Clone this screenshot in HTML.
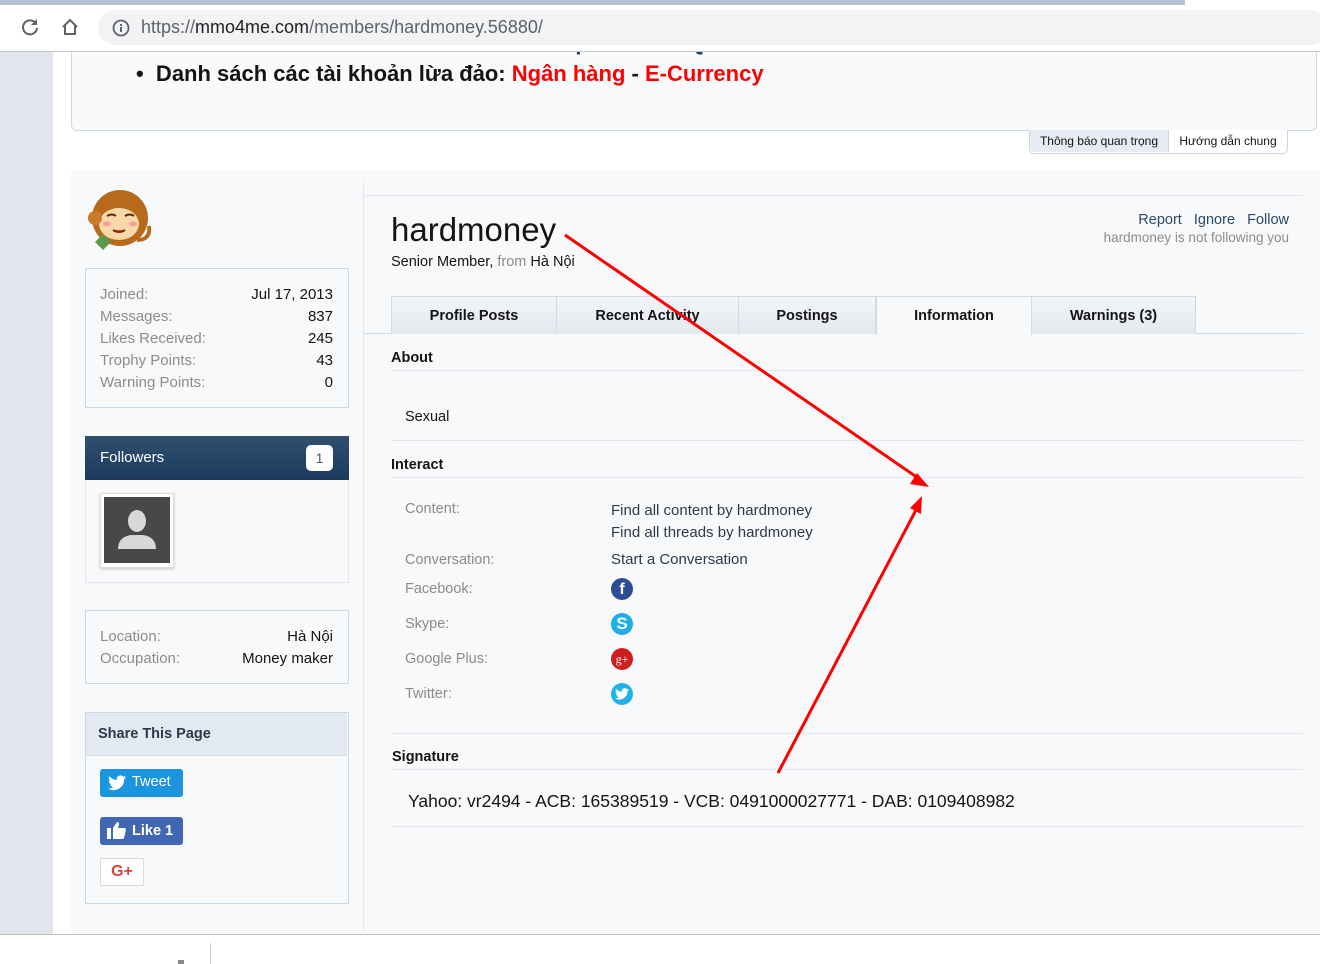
<!DOCTYPE html>
<html><head><meta charset="utf-8">
<style>
*{margin:0;padding:0;box-sizing:border-box}
body{width:1320px;height:964px;overflow:hidden;position:relative;background:#fff;font-family:"Liberation Sans",Arial,sans-serif;font-size:15px;color:#141414}
.a{position:absolute;white-space:nowrap}
.lab{color:#8c8c8c}
.r{text-align:right}
.tab{position:absolute;top:296px;height:38px;background:linear-gradient(#f3f5f8,#e3e9f0);border:1px solid #cfdbe7;border-bottom:none;font-weight:bold;font-size:14.5px;text-align:center;line-height:38px}
.hl{position:absolute;left:391px;right:17px;height:1px;background:#e1e6ed}
</style></head><body>
<!-- page -->
<div class="a" style="left:0;top:52px;width:53px;height:882px;background:#e1e6ee"></div>
<div class="a" style="left:71px;top:20px;width:1246px;height:111px;background:#f9fafc;border:1px solid #c8d8e6;border-top:none;border-radius:0 0 6px 6px"></div>
<div class="a" style="left:156px;top:30px;font-size:22px;font-weight:bold;color:#1b3a5d">Chính sách bảo hiểm khi SCAM có liên quan đến ĐQ?</div>
<div class="a" style="left:136px;top:61px;font-size:22px;font-weight:bold">•&nbsp; Danh sách các tài khoản lừa đảo: <span style="color:#f00">Ngân hàng</span> - <span style="color:#f00">E-Currency</span></div>
<!-- browser bar -->
<div class="a" style="left:0;top:0;width:1320px;height:52px;background:#fff;border-bottom:1px solid #c8c8c8"></div>
<div class="a" style="left:0;top:0;width:1185px;height:5px;background:#b5c1d1"></div>
<div class="a" style="left:98px;top:10px;width:1230px;height:35px;border-radius:18px;background:#f1f3f4"></div>
<svg class="a" style="left:20px;top:17px" width="20" height="20" viewBox="0 0 20 20"><path d="M15.5 6A7 7 0 1 0 17 11" fill="none" stroke="#5f6368" stroke-width="2"/><path d="M17 2v6h-6z" fill="#5f6368"/></svg>
<svg class="a" style="left:60px;top:17px" width="20" height="20" viewBox="0 0 20 20"><path d="M3 10L10 3l7 7M5 9v8h10V9" fill="none" stroke="#5f6368" stroke-width="2"/></svg>
<svg class="a" style="left:112px;top:19px" width="18" height="18" viewBox="0 0 18 18"><circle cx="9" cy="9" r="7.5" fill="none" stroke="#5f6368" stroke-width="1.8"/><rect x="8" y="8" width="2" height="5" fill="#5f6368"/><rect x="8" y="5" width="2" height="2" fill="#5f6368"/></svg>
<div class="a" style="left:141px;top:17px;font-size:18px;color:#5f6368">https://<span style="color:#202124">mmo4me.com</span>/members/hardmoney.56880/</div>

<div class="a" style="left:1029px;top:130px;width:259px;height:24px;border:1px solid #c8d8e6;border-top:none;border-radius:0 0 5px 5px;background:#fff;font-size:12px;line-height:22px"><span style="display:inline-block;width:139px;background:#e6ecf3;text-align:center;border-right:1px solid #c8d8e6">Thông báo quan trọng</span><span style="display:inline-block;width:118px;text-align:center">Hướng dẫn chung</span></div>
<!-- main area -->
<div class="a" style="left:71px;top:170px;width:1249px;height:764px;background:#f8f9fb"></div>
<div class="a" style="left:363px;top:182px;width:1px;height:750px;background:#e1e6ed"></div>
<div class="a" style="left:364px;top:195px;width:939px;height:1px;background:#e1e6ed"></div>
<!-- avatar -->
<svg class="a" style="left:85px;top:182px" width="68" height="68" viewBox="0 0 68 68"><circle cx="35" cy="36" r="28" fill="#b86a1c"/><ellipse cx="34" cy="42" rx="20" ry="16" fill="#f8d8a8"/><circle cx="10" cy="36" r="7" fill="#c97a2a"/><path d="M22 34q5-3 9 0M40 34q5-3 9 0" stroke="#5a2a0a" stroke-width="2" fill="none"/><ellipse cx="22" cy="42" rx="4" ry="2.5" fill="#f6a0a0"/><ellipse cx="48" cy="42" rx="4" ry="2.5" fill="#f6a0a0"/><path d="M28 48q6 4 12 0" stroke="#8a2a0a" stroke-width="2" fill="#e05050"/><path d="M10 60l8-8 8 8-8 8z" fill="#5a9a4a"/><path d="M52 58q14 0 12 -14" stroke="#b86a1c" stroke-width="4" fill="none"/></svg>
<!-- stats -->
<div class="a" style="left:85px;top:268px;width:264px;height:140px;border:1px solid #c8d8e6"></div>
<div class="a lab" style="left:100px;top:284px;line-height:22px">Joined:<br>Messages:<br>Likes Received:<br>Trophy Points:<br>Warning Points:</div>
<div class="a r" style="right:987px;top:284px;line-height:22px">Jul 17, 2013<br>837<br>245<br>43<br>0</div>
<!-- followers -->
<div class="a" style="left:85px;top:436px;width:264px;height:147px;border:1px solid #e1e6ed;border-top:none"></div>
<div class="a" style="left:85px;top:436px;width:264px;height:44px;background:linear-gradient(#30506f,#1b3a5d);color:#fff;line-height:44px;padding-left:15px">Followers</div>
<div class="a" style="left:306px;top:445px;width:27px;height:26px;background:#fff;border-radius:5px;color:#555;text-align:center;line-height:26px;font-size:14px">1</div>
<div class="a" style="left:100px;top:493px;width:74px;height:75px;background:#fff;border:1px solid #ddd;box-shadow:0 1px 3px rgba(0,0,0,.2)"></div>
<svg class="a" style="left:104px;top:497px" width="66" height="66" viewBox="0 0 66 66"><rect width="66" height="66" fill="#484848"/><ellipse cx="33" cy="24" rx="9" ry="11" fill="#d8d8d8"/><path d="M14 52q0-12 13-14h12q13 2 13 14z" fill="#d8d8d8"/></svg>
<!-- location -->
<div class="a" style="left:85px;top:610px;width:264px;height:74px;border:1px solid #c8d8e6"></div>
<div class="a lab" style="left:100px;top:626px;line-height:22px">Location:<br>Occupation:</div>
<div class="a r" style="right:987px;top:626px;line-height:22px">Hà Nội<br>Money maker</div>
<!-- share -->
<div class="a" style="left:85px;top:712px;width:264px;height:192px;border:1px solid #c8d8e6"></div>
<div class="a" style="left:86px;top:713px;width:261px;height:43px;background:#e3e9f0;border-bottom:1px solid #cfdbe7;font-weight:bold;color:#2a3a4a;line-height:42px;padding-left:12px;font-size:14.5px">Share This Page</div>
<div class="a" style="left:100px;top:769px;width:83px;height:28px;background:#1b95e0;border-radius:3px;color:#fff;line-height:27px;padding-left:32px;font-size:14.5px">Tweet</div>
<svg class="a" style="left:108px;top:775px" width="18" height="16" viewBox="0 0 24 20"><path d="M24 2.4a10 10 0 0 1-2.8.8A5 5 0 0 0 23.3.4a10 10 0 0 1-3.1 1.200A4.9 4.9 0 0 0 11.8 6 14 14 0 0 1 1.7.9a4.9 4.9 0 0 0 1.5 6.6 5 5 0 0 1-2.2-.6 4.9 4.9 0 0 0 3.900 4.9 5 5 0 0 1-2.2.1 4.9 4.9 0 0 0 4.6 3.4A9.9 9.9 0 0 1 0 17.3 14 14 0 0 0 21.5 5.3 10 10 0 0 0 24 2.4z" fill="#fff"/></svg>
<div class="a" style="left:100px;top:817px;width:83px;height:28px;background:#4267b2;border-radius:3px;color:#fff;line-height:28px;padding-left:32px;font-weight:bold;font-size:14.5px">Like 1</div>
<svg class="a" style="left:107px;top:821px" width="19" height="18" viewBox="0 0 19 18"><rect x="0" y="7" width="4" height="11" fill="#fff"/><path d="M6 7l4-6q2 0 2 2l-1 4h6q2 0 2 2l-2 8q-.5 1-2 1H6z" fill="#fff"/></svg>
<div class="a" style="left:100px;top:858px;width:44px;height:28px;background:#fff;border:1px solid #d8d8d8;border-radius:2px;color:#db4437;font-weight:bold;font-size:16px;line-height:26px;text-align:center">G+</div>
<!-- profile header -->
<div class="a" style="left:391px;top:211px;font-size:33px">hardmoney</div>
<div class="a" style="left:391px;top:254px;font-size:14.5px">Senior Member, <span style="color:#8c8c8c">from</span> Hà Nội</div>
<div class="a r" style="right:31px;top:212px;font-size:14.5px;color:#2b4a6a">Report&nbsp;&nbsp;&nbsp;Ignore&nbsp;&nbsp;&nbsp;Follow</div>
<div class="a r" style="right:31px;top:230px;font-size:13.5px;color:#8c8c8c">hardmoney is not following you</div>
<div class="a" style="left:364px;top:333px;width:939px;height:1px;background:#cfdbe7"></div>
<div class="tab" style="left:391px;width:166px">Profile Posts</div>
<div class="tab" style="left:556px;width:183px">Recent Activity</div>
<div class="tab" style="left:738px;width:138px">Postings</div>
<div class="tab" style="left:876px;width:156px;background:#f8f9fb;height:39px">Information</div>
<div class="tab" style="left:1031px;width:165px">Warnings (3)</div>
<!-- about -->
<div class="a" style="left:391px;top:350px;font-weight:bold;font-size:14.5px">About</div>
<div class="hl" style="top:370px"></div>
<div class="a" style="left:405px;top:409px;font-size:14.5px">Sexual</div>
<div class="hl" style="top:440px"></div>
<div class="a" style="left:391px;top:457px;font-weight:bold;font-size:14.5px">Interact</div>
<div class="hl" style="top:477px"></div>
<div class="a lab" style="left:405px;top:501px;font-size:14.5px">Content:</div>
<div class="a" style="left:611px;top:500px;font-size:15px;line-height:22px;color:#2b3a4a">Find all content by hardmoney<br>Find all threads by hardmoney</div>
<div class="a lab" style="left:405px;top:552px;font-size:14.5px">Conversation:</div>
<div class="a" style="left:611px;top:551px;font-size:15px;color:#2b3a4a">Start a Conversation</div>
<div class="a lab" style="left:405px;top:581px;font-size:14.5px">Facebook:</div>
<div class="a lab" style="left:405px;top:616px;font-size:14.5px">Skype:</div>
<div class="a lab" style="left:405px;top:651px;font-size:14.5px">Google Plus:</div>
<div class="a lab" style="left:405px;top:686px;font-size:14.5px">Twitter:</div>
<div class="a" style="left:611px;top:578px;width:22px;height:22px;border-radius:50%;background:#2d4e92;color:#fff;font-weight:bold;text-align:center;line-height:24px;font-size:16px">f</div>
<div class="a" style="left:611px;top:613px;width:22px;height:22px;border-radius:50%;background:#1eaee8;color:#fff;font-weight:bold;text-align:center;line-height:22px;font-size:17px">S</div>
<div class="a" style="left:611px;top:648px;width:22px;height:22px;border-radius:50%;background:#cc2020;color:#fff;text-align:center;line-height:22px;font-size:12px;font-family:'Liberation Serif',serif">g+</div>
<div class="a" style="left:611px;top:683px;width:22px;height:22px;border-radius:50%;background:#1fb3ea"></div>
<svg class="a" style="left:615px;top:688px" width="14" height="12" viewBox="0 0 24 20"><path d="M24 2.4a10 10 0 0 1-2.8.8A5 5 0 0 0 23.3.4a10 10 0 0 1-3.1 1.2A4.9 4.9 0 0 0 11.8 6 14 14 0 0 1 1.7.9a4.9 4.9 0 0 0 1.5 6.6 5 5 0 0 1-2.2-.6 4.9 4.9 0 0 0 3.9 4.9 5 5 0 0 1-2.2.1 4.9 4.9 0 0 0 4.6 3.4A9.9 9.9 0 0 1 0 17.3 14 14 0 0 0 21.5 5.3 10 10 0 0 0 24 2.4z" fill="#fff"/></svg>
<div class="hl" style="top:733px"></div>
<div class="a" style="left:392px;top:749px;font-weight:bold;font-size:14.5px">Signature</div>
<div class="hl" style="top:769px"></div>
<div class="a" style="left:408px;top:791px;font-size:17.5px">Yahoo: vr2494 - ACB: 165389519 - VCB: 0491000027771 - DAB: 0109408982</div>
<div class="hl" style="top:826px"></div>
<!-- bottom bar -->
<div class="a" style="left:0;top:934px;width:1320px;height:1px;background:#bdbdbd"></div>
<div class="a" style="left:210px;top:943px;width:1px;height:21px;background:#ccc"></div>
<div class="a" style="left:178px;top:960px;width:6px;height:4px;background:#888"></div>
<!-- arrows -->
<svg class="a" style="left:0;top:0" width="1320" height="964">
<line x1="565" y1="235" x2="918" y2="478" stroke="#f00" stroke-width="3"/>
<path d="M929 487l-19-3 7-11z" fill="#f00"/>
<line x1="778" y1="773" x2="917" y2="508" stroke="#f00" stroke-width="3"/>
<path d="M922 496l-1 18-11-6z" fill="#f00"/>
</svg>
</body></html>
